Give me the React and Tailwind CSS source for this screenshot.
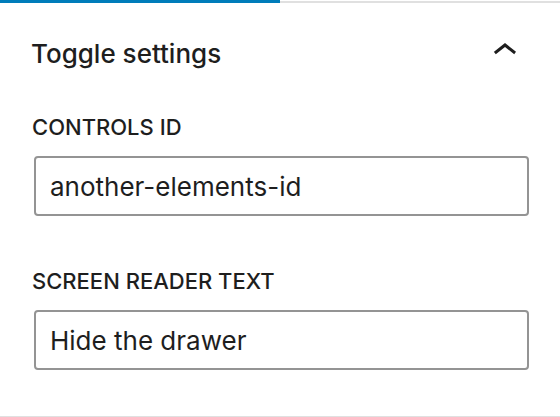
import React from "react";

// Chevron-up icon (WordPress style)
const ChevronUp = () => (
  <svg width="48" height="48" viewBox="0 0 24 24" fill="#1e1e1e">
    <path d="M6.5 12.4L12 8l5.5 4.4-.9 1.2L12 10l-4.6 3.6-1-1.2z" />
  </svg>
);

// Labelled text field
const Field = ({ label, value, className = "" }) => (
  <div className={className}>
    <div className="text-[22px] leading-[22px] font-medium uppercase text-[#1e1e1e]">
      {label}
    </div>
    <input
      readOnly
      value={value}
      className="mt-[18px] ml-[2px] block w-[495px] h-[60px] px-[14px] border-2 border-[#949494] rounded-[4px] text-[26px] text-[#1e1e1e] outline-none bg-white"
      style={{ fontFamily: "inherit" }}
    />
  </div>
);

export default function App() {
  return (
    <div
      className="w-[560px] h-[417px] bg-white flex flex-col"
      style={{ fontFamily: "Inter, 'Noto Sans', sans-serif" }}
    >
      {/* Tab indicator */}
      <div className="flex items-end h-[3px]">
        <div className="w-[280px] h-[3px] bg-[#007cba]" />
        <div className="flex-1 h-[2px] bg-[#e0e0e0]" />
      </div>

      <div className="flex-1 px-[32px] border-b border-[#e0e0e0]">
        <div className="h-[100px] flex items-center justify-between">
          <span className="-ml-px text-[26px] font-medium text-[#1e1e1e]">
            Toggle settings
          </span>
          <div className="-mr-px -mt-[4px]">
            <ChevronUp />
          </div>
        </div>

        <Field className="mt-[13px]" label="Controls ID" value="another-elements-id" />
        <Field className="mt-[54px]" label="Screen reader text" value="Hide the drawer" />
      </div>
    </div>
  );
}
